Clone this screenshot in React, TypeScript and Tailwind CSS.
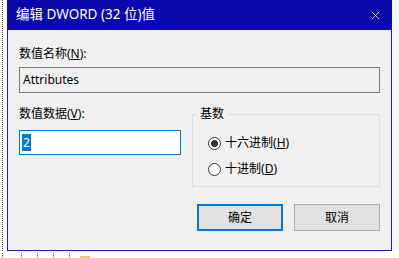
import { X } from 'lucide-react'

const font = { fontFamily: '"Noto Sans", "Noto Sans CJK SC", sans-serif' }

function Radio({ checked, label, hotkey }: { checked?: boolean; label: string; hotkey: string }) {
  return (
    <label className="flex items-center gap-[4px] text-[12px] leading-[16px] text-black">
      <span className="flex size-[13px] items-center justify-center rounded-full border border-[#333] bg-white">
        {checked && <span className="size-[7px] rounded-full bg-[#333]" />}
      </span>
      <span>
        {label}(<span className="underline">{hotkey}</span>)
      </span>
    </label>
  )
}

export default function App() {
  return (
    <div className="flex h-[258px] w-[399px] flex-col overflow-hidden bg-white" style={font}>
      <div className="flex h-[251px] shrink-0">
        <div className="w-[7px] shrink-0 pl-[2px]">
          <div className="h-full border-l border-dotted border-[#555]" />
        </div>

        <div className="flex w-[385px] shrink-0 flex-col border-x border-b border-[#1f1fa6] bg-[#f0f0f0]">
          {/* title bar */}
          <div className="-mx-px flex h-[30px] shrink-0 items-center justify-between bg-[#0a0aaa] pl-[9px] pr-[10px] text-white">
            <span className="text-[13.5px] leading-none">编辑 DWORD (32 位)值</span>
            <X className="size-[13px]" strokeWidth={1.4} />
          </div>

          <div className="flex flex-col px-[11px] pt-[16px]">
            <p className="text-[12px] leading-[16px] text-black">
              数值名称(<span className="underline">N</span>):
            </p>
            <div className="mt-[5px] flex h-[26px] items-center border border-[#7a7a7a] bg-[#f0f0f0] px-[3px] text-[12px] text-black">
              Attributes
            </div>

            <div className="mt-[13px] flex justify-between">
              <div className="flex w-[162px] flex-col">
                <p className="text-[12px] leading-[16px] text-black">
                  数值数据(<span className="underline">V</span>):
                </p>
                <div className="mt-[8px] flex h-[25px] items-center border border-[#0078d7] bg-white px-[2px]">
                  <span className="bg-[#0078d7] px-px text-[12px] leading-[17px] text-white">2</span>
                </div>
              </div>

              <fieldset className="h-[81px] w-[188px] border border-[#dcdcdc] px-[15px]">
                <legend className="-ml-[12px] px-[4px] text-[12px] leading-[16px] text-black">基数</legend>
                <div className="mt-[13px] flex flex-col gap-[10px]">
                  <Radio checked label="十六进制" hotkey="H" />
                  <Radio label="十进制" hotkey="D" />
                </div>
              </fieldset>
            </div>

            <div className="mt-[17px] flex justify-end gap-[11px]">
              <button className="flex h-[27px] w-[86px] items-center justify-center border-2 border-[#0078d7] bg-[#e1e1e1] text-[12px] text-black">
                确定
              </button>
              <button className="flex h-[27px] w-[86px] items-center justify-center border border-[#adadad] bg-[#e1e1e1] text-[12px] text-black">
                取消
              </button>
            </div>
          </div>
        </div>

        <div className="flex-1 bg-[#f7f7f7]" />
      </div>

      <div className="flex h-[7px] items-start pt-[2px]">
        <div className="ml-[2px] h-full border-l border-dotted border-[#555]" />
        <div className="ml-[18px] flex gap-[15px]">
          <div className="h-[5px] border-l border-dotted border-[#555]" />
          <div className="h-[5px] border-l border-dotted border-[#555]" />
          <div className="h-[5px] border-l border-dotted border-[#555]" />
          <div className="h-[5px] border-l border-dotted border-[#555]" />
        </div>
        <div className="ml-[10px] mt-[3px] h-[3px] w-[10px] bg-[#e8c860]" />
      </div>
    </div>
  )
}
